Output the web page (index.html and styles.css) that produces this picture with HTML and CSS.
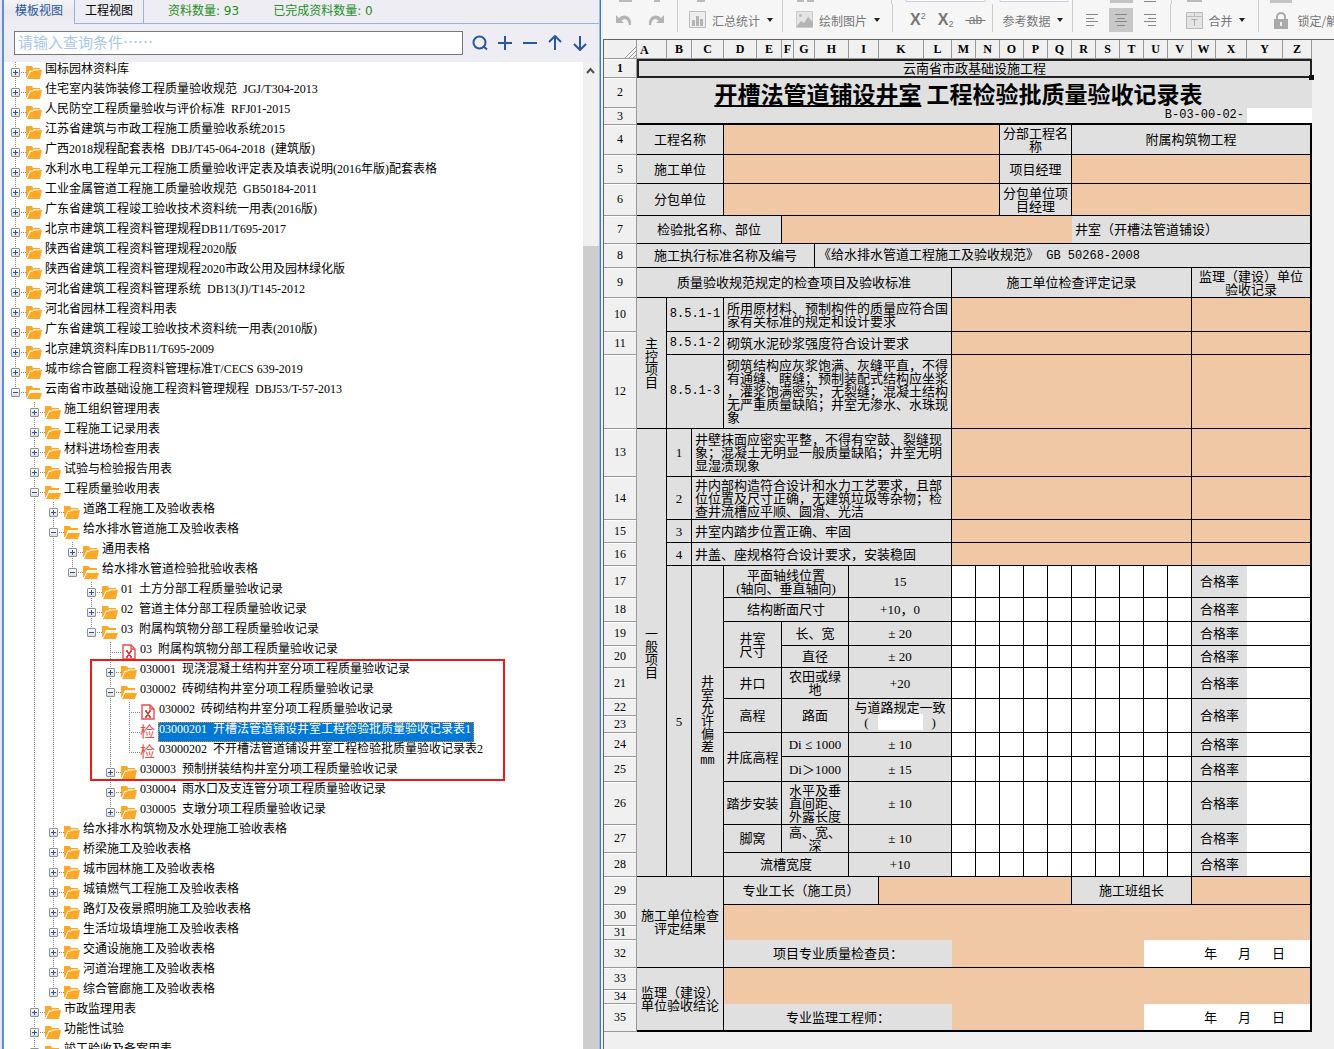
FILE: index.html
```
<!DOCTYPE html>
<html lang="zh-CN">
<head>
    <meta charset="UTF-8" />
    <meta name="viewport" content="width=device-width, initial-scale=1.0"/>
    <title>工程资料管理</title>
    <link rel="stylesheet" href="styles.css">
</head>
<body>
    <!-- Shared icons -->
    <svg class="sprite" aria-hidden="true">
        <symbol id="folder" viewBox="0 0 16 13">
            <path d="M0 0h6l1 2h7v3H4L1 11H0z" fill="#ffa726"/>
            <path d="M7 3h8v2H7z" fill="#ffe0b2"/>
            <path d="M4 6l3-1 9-1-2 9H1z" fill="#ffa726"/>
            <path d="M1 12l3-7h3l1-1" fill="none" stroke="#fff3e0"/>
        </symbol>
        <symbol id="folder-open" viewBox="0 0 16 13">
            <path d="M0 0h6l1 2h7v2H4L1 11H0z" fill="#ffa726"/>
            <path d="M5 5h9v2H4z" fill="#fff3e0"/>
            <path d="M4 7h12l-2 6H1z" fill="#ffa726"/>
        </symbol>
        <symbol id="file" viewBox="0 0 14 16">
            <path d="M1 1h8l4 4v10H1z" fill="#fff" stroke="#e94b4b" stroke-width="1.4"/>
            <path d="M9 1v4h4" fill="none" stroke="#e94b4b" stroke-width="1.4"/>
            <path d="M5 7l4 6M9 7l-4 6M4 7h2M8 7h2M4 13h2M8 13h2" fill="none" stroke="#d32f2f" stroke-width="1.4"/>
        </symbol>
    </svg>

    <aside class="panel">
        <nav class="tabs">
            <button class="tab active">模板视图</button>
            <button class="tab">工程视图</button>
            <span class="count">资料数量: 93</span>
            <span class="count">已完成资料数量: 0</span>
        </nav>

        <div class="search-bar">
            <input type="text" placeholder="请输入查询条件……" aria-label="查询条件" />
            <button aria-label="查询"><svg viewBox="0 0 16 16"><circle cx="7.5" cy="7.5" r="6"/><path d="M11 11l4 3.500"/></svg></button>
            <button aria-label="展开"><svg viewBox="0 0 16 16"><path d="M8 1v14M1 8h14"/></svg></button>
            <button aria-label="收起"><svg viewBox="0 0 16 16"><path d="M1 8h14"/></svg></button>
            <button aria-label="上一个"><svg viewBox="0 0 16 16"><path d="M8 2v13M2 7l6-6 6 6"/></svg></button>
            <button aria-label="下一个"><svg viewBox="0 0 16 16"><path d="M8 1v13M2 9l6 6 6-6"/></svg></button>
        </div>

        <div class="tree-area">
            <div class="tree">
                <ul>
                    <li><div class="node"><button class="toggle" aria-label="展开"></button><svg class="ico"><use href="#folder"/></svg><span class="label">国标园林资料库</span></div></li>
                    <li><div class="node"><button class="toggle" aria-label="展开"></button><svg class="ico"><use href="#folder"/></svg><span class="label">住宅室内装饰装修工程质量验收规范&ensp;JGJ/T304-2013</span></div></li>
                    <li><div class="node"><button class="toggle" aria-label="展开"></button><svg class="ico"><use href="#folder"/></svg><span class="label">人民防空工程质量验收与评价标准&ensp;RFJ01-2015</span></div></li>
                    <li><div class="node"><button class="toggle" aria-label="展开"></button><svg class="ico"><use href="#folder"/></svg><span class="label">江苏省建筑与市政工程施工质量验收系统2015</span></div></li>
                    <li><div class="node"><button class="toggle" aria-label="展开"></button><svg class="ico"><use href="#folder"/></svg><span class="label">广西2018规程配套表格&ensp;DBJ/T45-064-2018&ensp;(建筑版)</span></div></li>
                    <li><div class="node"><button class="toggle" aria-label="展开"></button><svg class="ico"><use href="#folder"/></svg><span class="label">水利水电工程单元工程施工质量验收评定表及填表说明(2016年版)配套表格</span></div></li>
                    <li><div class="node"><button class="toggle" aria-label="展开"></button><svg class="ico"><use href="#folder"/></svg><span class="label">工业金属管道工程施工质量验收规范&ensp;GB50184-2011</span></div></li>
                    <li><div class="node"><button class="toggle" aria-label="展开"></button><svg class="ico"><use href="#folder"/></svg><span class="label">广东省建筑工程竣工验收技术资料统一用表(2016版)</span></div></li>
                    <li><div class="node"><button class="toggle" aria-label="展开"></button><svg class="ico"><use href="#folder"/></svg><span class="label">北京市建筑工程资料管理规程DB11/T695-2017</span></div></li>
                    <li><div class="node"><button class="toggle" aria-label="展开"></button><svg class="ico"><use href="#folder"/></svg><span class="label">陕西省建筑工程资料管理规程2020版</span></div></li>
                    <li><div class="node"><button class="toggle" aria-label="展开"></button><svg class="ico"><use href="#folder"/></svg><span class="label">陕西省建筑工程资料管理规程2020市政公用及园林绿化版</span></div></li>
                    <li><div class="node"><button class="toggle" aria-label="展开"></button><svg class="ico"><use href="#folder"/></svg><span class="label">河北省建筑工程资料管理系统&ensp;DB13(J)/T145-2012</span></div></li>
                    <li><div class="node"><button class="toggle" aria-label="展开"></button><svg class="ico"><use href="#folder"/></svg><span class="label">河北省园林工程资料用表</span></div></li>
                    <li><div class="node"><button class="toggle" aria-label="展开"></button><svg class="ico"><use href="#folder"/></svg><span class="label">广东省建筑工程竣工验收技术资料统一用表(2010版)</span></div></li>
                    <li><div class="node"><button class="toggle" aria-label="展开"></button><svg class="ico"><use href="#folder"/></svg><span class="label">北京建筑资料库DB11/T695-2009</span></div></li>
                    <li><div class="node"><button class="toggle" aria-label="展开"></button><svg class="ico"><use href="#folder"/></svg><span class="label">城市综合管廊工程资料管理标准T/CECS 639-2019</span></div></li>
                    <li><div class="node"><button class="toggle open" aria-label="收起"></button><svg class="ico"><use href="#folder-open"/></svg><span class="label">云南省市政基础设施工程资料管理规程&ensp;DBJ53/T-57-2013</span></div>
                        <ul>
                            <li><div class="node"><button class="toggle" aria-label="展开"></button><svg class="ico"><use href="#folder"/></svg><span class="label">施工组织管理用表</span></div></li>
                            <li><div class="node"><button class="toggle" aria-label="展开"></button><svg class="ico"><use href="#folder"/></svg><span class="label">工程施工记录用表</span></div></li>
                            <li><div class="node"><button class="toggle" aria-label="展开"></button><svg class="ico"><use href="#folder"/></svg><span class="label">材料进场检查用表</span></div></li>
                            <li><div class="node"><button class="toggle" aria-label="展开"></button><svg class="ico"><use href="#folder"/></svg><span class="label">试验与检验报告用表</span></div></li>
                            <li><div class="node"><button class="toggle open" aria-label="收起"></button><svg class="ico"><use href="#folder-open"/></svg><span class="label">工程质量验收用表</span></div>
                                <ul>
                                    <li><div class="node"><button class="toggle" aria-label="展开"></button><svg class="ico"><use href="#folder"/></svg><span class="label">道路工程施工及验收表格</span></div></li>
                                    <li><div class="node"><button class="toggle open" aria-label="收起"></button><svg class="ico"><use href="#folder-open"/></svg><span class="label">给水排水管道施工及验收表格</span></div>
                                        <ul>
                                            <li><div class="node"><button class="toggle" aria-label="展开"></button><svg class="ico"><use href="#folder"/></svg><span class="label">通用表格</span></div></li>
                                            <li><div class="node"><button class="toggle open" aria-label="收起"></button><svg class="ico"><use href="#folder-open"/></svg><span class="label">给水排水管道检验批验收表格</span></div>
                                                <ul>
                                                    <li><div class="node"><button class="toggle" aria-label="展开"></button><svg class="ico"><use href="#folder"/></svg><span class="label">01&ensp;土方分部工程质量验收记录</span></div></li>
                                                    <li><div class="node"><button class="toggle" aria-label="展开"></button><svg class="ico"><use href="#folder"/></svg><span class="label">02&ensp;管道主体分部工程质量验收记录</span></div></li>
                                                    <li><div class="node"><button class="toggle open" aria-label="收起"></button><svg class="ico"><use href="#folder-open"/></svg><span class="label">03&ensp;附属构筑物分部工程质量验收记录</span></div>
                                                        <ul>
                                                            <li><div class="node leaf"><svg class="ico file"><use href="#file"/></svg><span class="label">03&ensp;附属构筑物分部工程质量验收记录</span></div></li>
                                                            <li><div class="node"><button class="toggle" aria-label="展开"></button><svg class="ico"><use href="#folder"/></svg><span class="label">030001&ensp;现浇混凝土结构井室分项工程质量验收记录</span></div></li>
                                                            <li><div class="node"><button class="toggle open" aria-label="收起"></button><svg class="ico"><use href="#folder-open"/></svg><span class="label">030002&ensp;砖砌结构井室分项工程质量验收记录</span></div>
                                                                <ul>
                                                                    <li><div class="node leaf"><svg class="ico file"><use href="#file"/></svg><span class="label">030002&ensp;砖砌结构井室分项工程质量验收记录</span></div></li>
                                                                    <li><div class="node leaf"><span class="ico check">检</span><span class="label selected">03000201&ensp;开槽法管道铺设井室工程检验批质量验收记录表1</span></div></li>
                                                                    <li><div class="node leaf"><span class="ico check">检</span><span class="label">03000202&ensp;不开槽法管道铺设井室工程检验批质量验收记录表2</span></div></li>
                                                                </ul>
                                                            </li>
                                                            <li><div class="node"><button class="toggle" aria-label="展开"></button><svg class="ico"><use href="#folder"/></svg><span class="label">030003&ensp;预制拼装结构井室分项工程质量验收记录</span></div></li>
                                                            <li><div class="node"><button class="toggle" aria-label="展开"></button><svg class="ico"><use href="#folder"/></svg><span class="label">030004&ensp;雨水口及支连管分项工程质量验收记录</span></div></li>
                                                            <li><div class="node"><button class="toggle" aria-label="展开"></button><svg class="ico"><use href="#folder"/></svg><span class="label">030005&ensp;支墩分项工程质量验收记录</span></div></li>
                                                        </ul>
                                                    </li>
                                                </ul>
                                            </li>
                                        </ul>
                                    </li>
                                    <li><div class="node"><button class="toggle" aria-label="展开"></button><svg class="ico"><use href="#folder"/></svg><span class="label">给水排水构筑物及水处理施工验收表格</span></div></li>
                                    <li><div class="node"><button class="toggle" aria-label="展开"></button><svg class="ico"><use href="#folder"/></svg><span class="label">桥梁施工及验收表格</span></div></li>
                                    <li><div class="node"><button class="toggle" aria-label="展开"></button><svg class="ico"><use href="#folder"/></svg><span class="label">城市园林施工及验收表格</span></div></li>
                                    <li><div class="node"><button class="toggle" aria-label="展开"></button><svg class="ico"><use href="#folder"/></svg><span class="label">城镇燃气工程施工及验收表格</span></div></li>
                                    <li><div class="node"><button class="toggle" aria-label="展开"></button><svg class="ico"><use href="#folder"/></svg><span class="label">路灯及夜景照明施工及验收表格</span></div></li>
                                    <li><div class="node"><button class="toggle" aria-label="展开"></button><svg class="ico"><use href="#folder"/></svg><span class="label">生活垃圾填埋施工及验收表格</span></div></li>
                                    <li><div class="node"><button class="toggle" aria-label="展开"></button><svg class="ico"><use href="#folder"/></svg><span class="label">交通设施施工及验收表格</span></div></li>
                                    <li><div class="node"><button class="toggle" aria-label="展开"></button><svg class="ico"><use href="#folder"/></svg><span class="label">河道治理施工及验收表格</span></div></li>
                                    <li><div class="node"><button class="toggle" aria-label="展开"></button><svg class="ico"><use href="#folder"/></svg><span class="label">综合管廊施工及验收表格</span></div></li>
                                </ul>
                            </li>
                            <li><div class="node"><button class="toggle" aria-label="展开"></button><svg class="ico"><use href="#folder"/></svg><span class="label">市政监理用表</span></div></li>
                            <li><div class="node"><button class="toggle" aria-label="展开"></button><svg class="ico"><use href="#folder"/></svg><span class="label">功能性试验</span></div></li>
                            <li><div class="node"><button class="toggle" aria-label="展开"></button><svg class="ico"><use href="#folder"/></svg><span class="label">竣工验收及备案用表</span></div></li>
                        </ul>
                    </li>
                </ul>
                <div class="mark"></div>
            </div>
            <div class="scrollbar">
                <svg viewBox="0 0 16 17"><path d="M4 11l3.500-4 3.500 4" fill="none" stroke="#505050" stroke-width="2"/></svg>
                <div class="thumb"></div>
            </div>
        </div>
    </aside>

    <main class="editor">
        <div class="toolbar">
            <!-- Lower edge of the upper tool row -->
            <svg class="upper-row" aria-hidden="true" width="731" height="4">
                <path d="M16 0h13v2H16zM51 0h6v2h-6zM94 0h8v2h-8zM194 0h7v2h-7zM204 0h7v2h-7zM584 0h15v2h-15z" fill="#bbb"/>
                <path d="M507 0h23v3h-23zM667 0h22v3h-22z" fill="#c4c4c4"/>
                <path d="M541 1.500h12" stroke="#888"/>
                <path d="M303 0v1.500h79V0M397 0v1.500h68V0" fill="#fff" stroke="#ccd"/>
                <path d="M74.500 0v4M179.500 0v4M288.500 0v4M469.500 0v4M568.500 0v4M655.500 0v4" stroke="#ccc"/>
            </svg>
            <div class="tools">
                <div class="group undo">
                    <button aria-label="撤销"><svg width="16" height="16" viewBox="0 0 16 16"><path d="M0 3v8h8L5.500 8.500C9 5.500 12 7 13 13h2C16 5 9 .5 3 6z" fill="#b4b4b4"/></svg></button>
                    <button aria-label="重做"><svg width="16" height="16" viewBox="0 0 16 16"><path d="M16 3v8H8l2.500-2.500C7 5.500 4 7 3 13H1C0 5 7 .5 13 6z" fill="#b4b4b4"/></svg></button>
                </div>
                <div class="group stats">
                    <button><svg width="18" height="18" viewBox="0 0 18 18"><path d="M.5.500h16v16H.5z" fill="#eee" stroke="#bbb"/><path d="M3 9h3v6H3zM7 5h3v10H7zM11 8h3v7h-3z" fill="#b4b4b4"/></svg>汇总统计<i class="caret"></i></button>
                </div>
                <div class="group draw">
                    <button><svg width="18" height="18" viewBox="0 0 18 18"><path d="M.5.500h16v16H.5z" fill="#e4e4e4" stroke="#ccc"/><circle cx="4.500" cy="4.500" r="1.500" fill="#bbb"/><path d="M1 15l4-5 3 2 4-6 5 5v5H1z" fill="#b4b4b4"/></svg>绘制图片<i class="caret"></i></button>
                </div>
                <div class="group script">
                    <button class="letter" aria-label="上标">X<sup>2</sup></button>
                    <button class="letter" aria-label="下标">X<sub>2</sub></button>
                    <button class="strike"><s>&nbsp;ab&nbsp;</s></button>
                </div>
                <div class="group refer">
                    <button>参考数据<i class="caret"></i></button>
                </div>
                <div class="group align">
                    <button aria-label="左对齐"><svg width="12" height="12"><path d="M0 .5h12M0 4.500h8M0 7.500h12M0 11.500h8"/></svg></button>
                    <button class="on" aria-label="居中"><svg width="12" height="12"><path d="M0 .5h12M2 4.500h8M0 7.500h12M2 11.500h8"/></svg></button>
                    <button aria-label="右对齐"><svg width="12" height="12"><path d="M0 .5h12M4 4.500h8M0 7.500h12M4 11.500h8"/></svg></button>
                </div>
                <div class="group merge">
                    <button><svg width="17" height="17" viewBox="0 0 17 17"><path d="M.5.500h16v16H.5zM.5 4.500h16M8.500 0v4" fill="#e4e4e4" stroke="#bbb"/><path d="M5.500 7.500h6M8.500 7.500v6" stroke="#aaa"/></svg>合并<i class="caret"></i></button>
                </div>
                <div class="group lock">
                    <button><svg width="16" height="17" viewBox="0 0 16 17"><path d="M4 8V5a4 4 0 0 1 8 0v3" fill="none" stroke="#aaa" stroke-width="2"/><path d="M1 7h14v10H1z" fill="#aaa"/><path d="M7 10h2v4H7z" fill="#eee"/></svg>锁定/解锁</button>
                </div>
            </div>
        </div>

        <div class="sheet-wrap">
            <table class="sheet">
                <colgroup>
                    <col class="c33"><col class="c30"><col class="c25"><col class="c32"><col class="c33"><col class="c25"><col class="c12"><col class="c21"><col class="c34"><col class="c30"><col class="c45"><col class="c28">
                    <col span="11" class="c24"><col class="c31"><col class="c36"><col class="c29">
                </colgroup>
                <thead>
                    <tr class="h19"><th class="corner"><svg width="12" height="12"><path d="M1 12L12 1M5 12l7-7M9 12l3-3" stroke="#999"/></svg></th><th class="first">A</th><th>B</th><th>C</th><th>D</th><th>E</th><th>F</th><th>G</th><th>H</th><th>I</th><th>K</th><th>L</th><th>M</th><th>N</th><th>O</th><th>P</th><th>Q</th><th>R</th><th>S</th><th>T</th><th>U</th><th>V</th><th>W</th><th>X</th><th>Y</th><th>Z</th></tr>
                </thead>
                <tbody>
                    <tr class="h19"><th class="current">1</th><td colspan="25" class="active-cell">云南省市政基础设施工程</td></tr>
                    <tr class="h30"><th>2</th><td colspan="25" class="title"><u>开槽法管道铺设井室</u> 工程检验批质量验收记录表</td></tr>
                    <tr class="h17 number-row"><th>3</th><td colspan="23" class="number heavy">B-03-00-02-</td><td colspan="2" class="white heavy"></td></tr>
                    <tr class="h30"><th>4</th><td colspan="3">工程名称</td><td colspan="10" class="fill"></td><td colspan="3">分部工程名称</td><td colspan="9">附属构筑物工程</td></tr>
                    <tr class="h29"><th>5</th><td colspan="3">施工单位</td><td colspan="10" class="fill"></td><td colspan="3">项目经理</td><td colspan="9" class="fill"></td></tr>
                    <tr class="h32"><th>6</th><td colspan="3">分包单位</td><td colspan="10" class="fill"></td><td colspan="3">分包单位项目经理</td><td colspan="9" class="fill"></td></tr>
                    <tr class="h28"><th>7</th><td colspan="5">检验批名称、部位</td><td colspan="11" class="fill open-right"></td><td colspan="9" class="left">井室（开槽法管道铺设）</td></tr>
                    <tr class="h24"><th>8</th><td colspan="7">施工执行标准名称及编号</td><td colspan="18" class="left">《给水排水管道工程施工及验收规范》<span class="mono"> GB 50268-2008</span></td></tr>
                    <tr class="h30"><th>9</th><td colspan="11">质量验收规范规定的检查项目及验收标准</td><td colspan="10">施工单位检查评定记录</td><td colspan="4">监理（建设）单位<br>验收记录</td></tr>
                    <tr class="h34"><th>10</th><td rowspan="3">主<br>控<br>项<br>目</td><td colspan="2" class="mono">8.5.1-1</td><td colspan="8" class="left">所用原材料、预制构件的质量应符合国家有关标准的规定和设计要求</td><td colspan="10" class="fill"></td><td colspan="4" class="fill"></td></tr>
                    <tr class="h23"><th>11</th><td colspan="2" class="mono">8.5.1-2</td><td colspan="8" class="left">砌筑水泥砂浆强度符合设计要求</td><td colspan="10" class="fill"></td><td colspan="4" class="fill"></td></tr>
                    <tr class="h74"><th>12</th><td colspan="2" class="mono">8.5.1-3</td><td colspan="8" class="left">砌筑结构应灰浆饱满、灰缝平直，不得有通缝、瞎缝；预制装配式结构应坐浆，灌浆饱满密实，无裂缝；混凝土结构无严重质量缺陷；井室无渗水、水珠现象</td><td colspan="10" class="fill"></td><td colspan="4" class="fill"></td></tr>
                    <tr class="h48"><th>13</th><td rowspan="16">一<br>般<br>项<br>目</td><td>1</td><td colspan="9" class="left">井壁抹面应密实平整，不得有空鼓、裂缝现象；混凝土无明显一般质量缺陷；井室无明显湿渍现象</td><td colspan="10" class="fill"></td><td colspan="4" class="fill"></td></tr>
                    <tr class="h43"><th>14</th><td>2</td><td colspan="9" class="left">井内部构造符合设计和水力工艺要求，且部位位置及尺寸正确，无建筑垃圾等杂物；检查井流槽应平顺、圆滑、光洁</td><td colspan="10" class="fill"></td><td colspan="4" class="fill"></td></tr>
                    <tr class="h23"><th>15</th><td>3</td><td colspan="9" class="left">井室内踏步位置正确、牢固</td><td colspan="10" class="fill"></td><td colspan="4" class="fill"></td></tr>
                    <tr class="h23"><th>16</th><td>4</td><td colspan="9" class="left">井盖、座规格符合设计要求，安装稳固</td><td colspan="10" class="fill"></td><td colspan="4" class="fill"></td></tr>
                    <tr class="h32"><th>17</th><td rowspan="12">5</td><td rowspan="12">井<br>室<br>允<br>许<br>偏<br>差<br><span class="mono">mm</span></td><td colspan="5">平面轴线位置<br>(轴向、垂直轴向)</td><td colspan="3">15</td><td class="white"></td><td class="white"></td><td class="white"></td><td class="white"></td><td class="white"></td><td class="white"></td><td class="white"></td><td class="white"></td><td class="white"></td><td class="white"></td><td colspan="2" class="open-right">合格率</td><td colspan="2" class="white"></td></tr>
                    <tr class="h24"><th>18</th><td colspan="5">结构断面尺寸</td><td colspan="3">+10，0</td><td class="white"></td><td class="white"></td><td class="white"></td><td class="white"></td><td class="white"></td><td class="white"></td><td class="white"></td><td class="white"></td><td class="white"></td><td class="white"></td><td colspan="2" class="open-right">合格率</td><td colspan="2" class="white"></td></tr>
                    <tr class="h24"><th>19</th><td colspan="2" rowspan="2">井室<br>尺寸</td><td colspan="3">长、宽</td><td colspan="3">± 20</td><td class="white"></td><td class="white"></td><td class="white"></td><td class="white"></td><td class="white"></td><td class="white"></td><td class="white"></td><td class="white"></td><td class="white"></td><td class="white"></td><td colspan="2" class="open-right">合格率</td><td colspan="2" class="white"></td></tr>
                    <tr class="h22"><th>20</th><td colspan="3">直径</td><td colspan="3">± 20</td><td class="white"></td><td class="white"></td><td class="white"></td><td class="white"></td><td class="white"></td><td class="white"></td><td class="white"></td><td class="white"></td><td class="white"></td><td class="white"></td><td colspan="2" class="open-right">合格率</td><td colspan="2" class="white"></td></tr>
                    <tr class="h31"><th>21</th><td colspan="2">井口</td><td colspan="3">农田或绿<br>地</td><td colspan="3">+20</td><td class="white"></td><td class="white"></td><td class="white"></td><td class="white"></td><td class="white"></td><td class="white"></td><td class="white"></td><td class="white"></td><td class="white"></td><td class="white"></td><td colspan="2" class="open-right">合格率</td><td colspan="2" class="white"></td></tr>
                    <tr class="h17"><th>22</th><td colspan="2" rowspan="2">高程</td><td colspan="3" rowspan="2">路面</td><td colspan="3" rowspan="2">与道路规定一致<div class="paren">(<input type="text" aria-label="规定值" />)</div></td><td rowspan="2" class="white"></td><td rowspan="2" class="white"></td><td rowspan="2" class="white"></td><td rowspan="2" class="white"></td><td rowspan="2" class="white"></td><td rowspan="2" class="white"></td><td rowspan="2" class="white"></td><td rowspan="2" class="white"></td><td rowspan="2" class="white"></td><td rowspan="2" class="white"></td><td colspan="2" rowspan="2" class="open-right">合格率</td><td colspan="2" rowspan="2" class="white"></td></tr>
                    <tr class="h17"><th>23</th></tr>
                    <tr class="h24"><th>24</th><td colspan="2" rowspan="2">井底高程</td><td colspan="3">Di ≤ 1000</td><td colspan="3">± 10</td><td class="white"></td><td class="white"></td><td class="white"></td><td class="white"></td><td class="white"></td><td class="white"></td><td class="white"></td><td class="white"></td><td class="white"></td><td class="white"></td><td colspan="2" class="open-right">合格率</td><td colspan="2" class="white"></td></tr>
                    <tr class="h25"><th>25</th><td colspan="3">Di＞1000</td><td colspan="3">± 15</td><td class="white"></td><td class="white"></td><td class="white"></td><td class="white"></td><td class="white"></td><td class="white"></td><td class="white"></td><td class="white"></td><td class="white"></td><td class="white"></td><td colspan="2" class="open-right">合格率</td><td colspan="2" class="white"></td></tr>
                    <tr class="h43"><th>26</th><td colspan="2">踏步安装</td><td colspan="3">水平及垂<br>直间距、<br>外露长度</td><td colspan="3">± 10</td><td class="white"></td><td class="white"></td><td class="white"></td><td class="white"></td><td class="white"></td><td class="white"></td><td class="white"></td><td class="white"></td><td class="white"></td><td class="white"></td><td colspan="2" class="open-right">合格率</td><td colspan="2" class="white"></td></tr>
                    <tr class="h28"><th>27</th><td colspan="2">脚窝</td><td colspan="3">高、宽、<br>深</td><td colspan="3">± 10</td><td class="white"></td><td class="white"></td><td class="white"></td><td class="white"></td><td class="white"></td><td class="white"></td><td class="white"></td><td class="white"></td><td class="white"></td><td class="white"></td><td colspan="2" class="open-right">合格率</td><td colspan="2" class="white"></td></tr>
                    <tr class="h24"><th>28</th><td colspan="5">流槽宽度</td><td colspan="3">+10</td><td class="white"></td><td class="white"></td><td class="white"></td><td class="white"></td><td class="white"></td><td class="white"></td><td class="white"></td><td class="white"></td><td class="white"></td><td class="white"></td><td colspan="2" class="open-right">合格率</td><td colspan="2" class="white"></td></tr>
                    <tr class="h28"><th>29</th><td colspan="3" rowspan="4">施工单位检查<br>评定结果</td><td colspan="6">专业工长（施工员）</td><td colspan="7" class="fill"></td><td colspan="5">施工班组长</td><td colspan="4" class="fill"></td></tr>
                    <tr class="h21"><th>30</th><td colspan="22" rowspan="2" class="fill open-bottom"></td></tr>
                    <tr class="h14"><th>31</th></tr>
                    <tr class="h28"><th>32</th><td colspan="8" class="open-right">项目专业质量检查员：</td><td colspan="8" class="fill open-right"></td><td colspan="6" class="white date"><span>年</span><span>月</span><span>日</span></td></tr>
                    <tr class="h22"><th>33</th><td colspan="3" rowspan="3" class="heavy">监理（建设）<br>单位验收结论</td><td colspan="22" rowspan="2" class="fill open-bottom"></td></tr>
                    <tr class="h14"><th>34</th></tr>
                    <tr class="h28"><th>35</th><td colspan="8" class="open-right heavy">专业监理工程师：</td><td colspan="8" class="fill open-right heavy"></td><td colspan="6" class="white date heavy"><span>年</span><span>月</span><span>日</span></td></tr>
                </tbody>
            </table>
        </div>
    </main>
</body>
</html>
```
FILE: styles.css
```
/* General Reset */
* {
    box-sizing: border-box;
    margin: 0;
    padding: 0;
}

body {
    display: flex;
    height: 100vh;
    overflow: hidden;
    background-color: #f0f0f0;
    color: #000;
    font-family: "Liberation Serif", "Noto Sans CJK SC", serif;
    font-size: 12px;
}

button {
    border: none;
    background: none;
    color: inherit;
    font-family: "Noto Sans CJK SC", sans-serif;
    font-size: 12px;
    white-space: nowrap;
}

.sprite {
    display: none;
}

/* Left panel */
.panel {
    display: flex;
    flex-direction: column;
    flex: none;
    width: 601px;
    border-left: 2px solid #e4e8f0;
    border-right: 1px solid #3c78c8;
    box-shadow: inset 2px 0 #5a8ed8, inset -1px 0 #a0b8e8;
    background-color: #ededf3;
    padding: 0 1px 0 2px;
}

.tabs {
    display: flex;
    flex: none;
    height: 24px;
    border-bottom: 1px solid #94b4e4;
}

.tab {
    width: 70px;
    height: 24px;
    padding-bottom: 5px;
    border: 1px solid #94b4e4;
    border-top: none;
}

.tab.active {
    border: none;
    background: linear-gradient(#f4f4f8, #e8e8ee 50%, #ededf3);
    color: #2a569c;
}

.count {
    margin-left: 24px;
    color: #229022;
    font-family: "DejaVu Sans", "Noto Sans CJK SC", sans-serif;
    font-size: 12px;
    line-height: 22px;
}

.count + .count {
    margin-left: 34px;
}

/* Search Bar */
.search-bar {
    display: flex;
    flex: none;
    align-items: center;
    gap: 9px;
    height: 38px;
    padding: 0 11px 0 10px;
}

.search-bar input {
    flex: 1;
    min-width: 0;
    height: 24px;
    padding: 0 3px 3px;
    border: 1px solid #777;
    background-color: #fff;
    font-family: "Noto Sans CJK SC", sans-serif;
    font-size: 15px;
}

.search-bar input::placeholder {
    color: #a8c8e8;
}

.search-bar svg {
    display: block;
    width: 16px;
    height: 16px;
    fill: none;
    stroke: #2a569c;
    stroke-width: 2;
}

/* Tree */
.tree-area {
    display: flex;
    flex: 1;
    min-height: 0;
    background-color: #fff;
}

.tree {
    position: relative;
    flex: 1;
    overflow: hidden;
    padding-left: 2px;
}

.tree ul {
    list-style: none;
}

.tree ul ul {
    margin-left: 19px;
}

/* Dotted guide down the siblings; the last one stops at its own row */
.tree li {
    background: repeating-linear-gradient(#888 0 1px, transparent 1px 2px) 9px 0 / 1px 100% no-repeat;
}

.tree li:last-child {
    background-size: 1px 10px;
}

.node {
    display: flex;
    align-items: center;
    height: 20px;
    padding-left: 5px;
    background: repeating-linear-gradient(to right, #888 0 1px, transparent 1px 2px) 9px 10px / 11px 1px no-repeat;
    white-space: nowrap;
}

.node.leaf {
    padding-left: 20px;
}

.toggle {
    flex: none;
    width: 9px;
    height: 9px;
    margin-right: 6px;
    border: 1px solid #919191;
    border-radius: 1px;
    background:
        linear-gradient(#2a50a0, #2a50a0) center / 5px 1px no-repeat,
        linear-gradient(#2a50a0, #2a50a0) center / 1px 5px no-repeat,
        linear-gradient(#fff, #ddd);
}

.toggle.open {
    background:
        linear-gradient(#2a50a0, #2a50a0) center / 5px 1px no-repeat,
        linear-gradient(#fff, #ddd);
}

.ico {
    flex: none;
    width: 16px;
    height: 13px;
    margin-right: 2px;
}

.ico.file {
    height: 16px;
}

.ico.check {
    height: 20px;
    color: #f04848;
    font-size: 15px;
    line-height: 20px;
}

.label {
    align-self: stretch;
    padding: 0 3px 0 1px;
    line-height: 14px;
}

.label.selected {
    background-color: #0078d7;
    color: #fff;
    outline: 1px dotted #f08020;
    outline-offset: -1px;
}

.mark {
    position: absolute;
    top: 597px;
    left: 86px;
    width: 415px;
    height: 122px;
    border: 2px solid #f01818;
}

.scrollbar {
    display: flex;
    flex-direction: column;
    flex: none;
    width: 16px;
    background-color: #f0f0f0;
}

.scrollbar svg {
    display: block;
    flex: none;
    width: 16px;
    height: 17px;
}

.thumb {
    flex: 1;
    margin-top: 167px;
    background-color: #cdcdcd;
}

/* Editor */
.editor {
    display: flex;
    flex-direction: column;
    flex: 1;
    min-width: 0;
    margin-left: 2px;
    overflow: hidden;
}

.toolbar {
    flex: none;
    height: 39px;
    overflow: hidden;
    background-color: #f6f6f6;
    color: #777;
}

.upper-row {
    display: block;
}

.tools {
    display: flex;
}

.group {
    display: flex;
    flex: none;
    align-items: center;
    height: 28px;
    padding-top: 4px;
    border-right: 1px solid #ccc;
}

.group button {
    display: flex;
    align-items: center;
    gap: 5px;
}

.undo {
    gap: 16px;
    padding-left: 13px;
    padding-right: 13px;
}

.stats {
    padding-left: 11px;
    padding-right: 9px;
}

.draw {
    padding-left: 13px;
    padding-right: 12px;
}

.script {
    gap: 12px;
    padding-left: 17px;
    padding-right: 7px;
}

.refer {
    padding-left: 9px;
    padding-right: 9px;
}

.align {
    gap: 5px;
    padding-left: 7px;
    padding-right: 8px;
}

.merge {
    padding-left: 15px;
    padding-right: 13px;
}

.lock {
    padding-left: 14px;
    border-right: none;
}

.lock button {
    gap: 8px;
}

.caret {
    margin-left: 2px;
    border: 3px solid transparent;
    border-top: 4px solid #222;
    border-bottom: none;
}

.group .letter {
    gap: 0;
    font-family: "Liberation Sans", sans-serif;
    font-size: 16px;
    font-weight: bold;
}

.letter sup,
.letter sub {
    font-size: 9px;
    font-weight: normal;
}

.letter sup {
    align-self: flex-start;
}

.letter sub {
    align-self: flex-end;
}

.group .strike {
    font-family: "Liberation Sans", sans-serif;
    font-size: 12px;
}

.align button {
    justify-content: center;
    width: 24px;
    height: 24px;
}

.align button.on {
    background-color: #c8c8c8;
}

.align path {
    fill: none;
    stroke: #888;
}

/* Spreadsheet */
.sheet-wrap {
    flex: 1;
    min-height: 0;
    overflow: hidden;
    border-top: 1px solid #646464;
    border-left: 1px solid #646464;
}

.sheet {
    table-layout: fixed;
    width: 708px;
    border-collapse: separate;
    border-spacing: 0;
    font-size: 13px;
    line-height: 13px;
}

.c12 { width: 12px; }
.c21 { width: 21px; }
.c24 { width: 24px; }
.c25 { width: 25px; }
.c28 { width: 28px; }
.c29 { width: 29px; }
.c30 { width: 30px; }
.c31 { width: 31px; }
.c32 { width: 32px; }
.c33 { width: 33px; }
.c34 { width: 34px; }
.c36 { width: 36px; }
.c45 { width: 45px; }

.h14 { height: 14px; }
.h17 { height: 17px; }
.h19 { height: 19px; }
.h21 { height: 21px; }
.h22 { height: 22px; }
.h23 { height: 23px; }
.h24 { height: 24px; }
.h25 { height: 25px; }
.h28 { height: 28px; }
.h29 { height: 29px; }
.h30 { height: 30px; }
.h31 { height: 31px; }
.h32 { height: 32px; }
.h34 { height: 34px; }
.h43 { height: 43px; }
.h48 { height: 48px; }
.h74 { height: 74px; }

.sheet th {
    border-right: 1px solid #999;
    border-bottom: 1px solid #999;
    background-color: #f0f0f0;
    box-shadow: inset 0 1px #fff;
    font-size: 12px;
    font-weight: normal;
}

.sheet thead th,
.sheet th.current {
    font-weight: bold;
}

.sheet thead th {
    box-shadow: none;
}

.sheet thead .first {
    padding: 3px 0 0 3px;
    text-align: left;
}

.corner svg {
    display: block;
    margin: 6px 0 0 20px;
}

.sheet td {
    border-right: 1px solid #000;
    border-bottom: 1px solid #000;
    background-color: #e0e0e0;
    text-align: center;
    vertical-align: middle;
    word-break: break-all;
}

.sheet td.left {
    padding-left: 3px;
    text-align: left;
    line-break: anywhere;
}

.sheet td.fill {
    background-color: #f0c8a5;
}

.sheet td.white {
    background-color: #fff;
}

.sheet td.open-right {
    border-right: none;
}

.sheet td.open-bottom {
    border-bottom: none;
}

.sheet td.heavy {
    border-bottom-width: 2px;
}

/* Heavy right edge of the form */
.sheet tr td:last-child {
    border-right-width: 2px;
}

.sheet .number-row td:last-child,
.sheet td.number,
.sheet td.title {
    border-right: none;
}

.sheet td.active-cell {
    position: relative;
    border: 2px solid #222;
}

.active-cell::after {
    content: '';
    position: absolute;
    right: -4px;
    bottom: -4px;
    width: 5px;
    height: 5px;
    background-color: #111;
}

.sheet td.title {
    padding-right: 32px;
    border-bottom: none;
    font-family: "Noto Sans CJK SC", sans-serif;
    font-size: 23px;
    font-weight: bold;
    line-height: 28px;
}

.sheet .mono,
.sheet td.number {
    font-family: "Liberation Mono", monospace;
    font-size: 12px;
}

.sheet td.number {
    padding-right: 3px;
    text-align: right;
}

.paren {
    display: flex;
    align-items: center;
    justify-content: center;
    gap: 9px;
}

.paren input {
    width: 45px;
    height: 16px;
    border: none;
    background-color: #fff;
}

.sheet td.date {
    padding-right: 25px;
    text-align: right;
}

.date span {
    margin-left: 21px;
}
```
